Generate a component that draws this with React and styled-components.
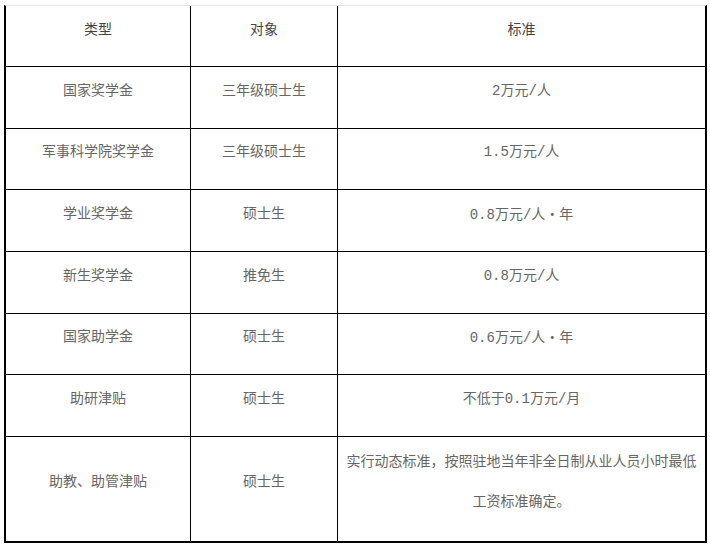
import React from "react";
import styled, { createGlobalStyle } from "styled-components";

const GlobalStyle = createGlobalStyle`
  html, body {
    margin: 0;
    padding: 0;
    background: #ffffff;
  }
`;

const Page = styled.div`
  padding: 5px 3px 0 4px;
`;

const Table = styled.table`
  width: 703px;
  border-collapse: separate;
  border-spacing: 0;
  table-layout: fixed;
  border-left: 2px solid #000;
  border-right: 2px solid #000;
  border-bottom: 2px solid #000;
  border-top: 1px solid #e6e6e6;
  font-family: "Liberation Mono", "Noto Sans CJK SC", sans-serif;
  font-size: 14px;
`;

const Col = styled.col`
  width: ${(props) => props.w}px;
`;

const Row = styled.tr`
  height: ${(props) => props.h}px;
`;

const Cell = styled.td`
  box-sizing: border-box;
  padding: ${(props) => (props.head ? "2px" : "0")} 6px 14px;
  text-align: center;
  vertical-align: middle;
  line-height: 40px;
  color: ${(props) => (props.head ? "#444" : "#666")};
  border-right: ${(props) => (props.last ? "none" : "1px solid #000")};
  border-bottom: ${(props) => (props.bottom ? "none" : "1px solid #000")};
`;

const Dot = styled.span`
  display: inline-block;
  width: 14px;
  text-align: center;
  font-family: "Noto Sans CJK SC", sans-serif;
`;

const rows = [
  ["国家奖学金", "三年级硕士生", "2万元/人"],
  ["军事科学院奖学金", "三年级硕士生", "1.5万元/人"],
  ["学业奖学金", "硕士生", ["0.8万元/人", "年"]],
  ["新生奖学金", "推免生", "0.8万元/人"],
  ["国家助学金", "硕士生", ["0.6万元/人", "年"]],
  ["助研津贴", "硕士生", "不低于0.1万元/月"],
];

const heights = [62, 61, 62, 62, 61, 62];

const Standard = ({ value }) =>
  Array.isArray(value) ? (
    <>
      {value[0]}
      <Dot>·</Dot>
      {value[1]}
    </>
  ) : (
    value
  );

const App = () => {
  return (
    <Page>
      <GlobalStyle />
      <Table>
        <colgroup>
          <Col w={185} />
          <Col w={147} />
          <Col w={367} />
        </colgroup>
        <tbody>
          <Row h={61}>
            <Cell head>类型</Cell>
            <Cell head>对象</Cell>
            <Cell head last>
              标准
            </Cell>
          </Row>
          {rows.map((r, i) => (
            <Row key={r[0]} h={heights[i]}>
              <Cell>{r[0]}</Cell>
              <Cell>{r[1]}</Cell>
              <Cell last>
                <Standard value={r[2]} />
              </Cell>
            </Row>
          ))}
          <Row h={104}>
            <Cell bottom>助教、助管津贴</Cell>
            <Cell bottom>硕士生</Cell>
            <Cell bottom last>
              实行动态标准，按照驻地当年非全日制从业人员小时最低工资标准确定。
            </Cell>
          </Row>
        </tbody>
      </Table>
    </Page>
  );
};

export default App;
